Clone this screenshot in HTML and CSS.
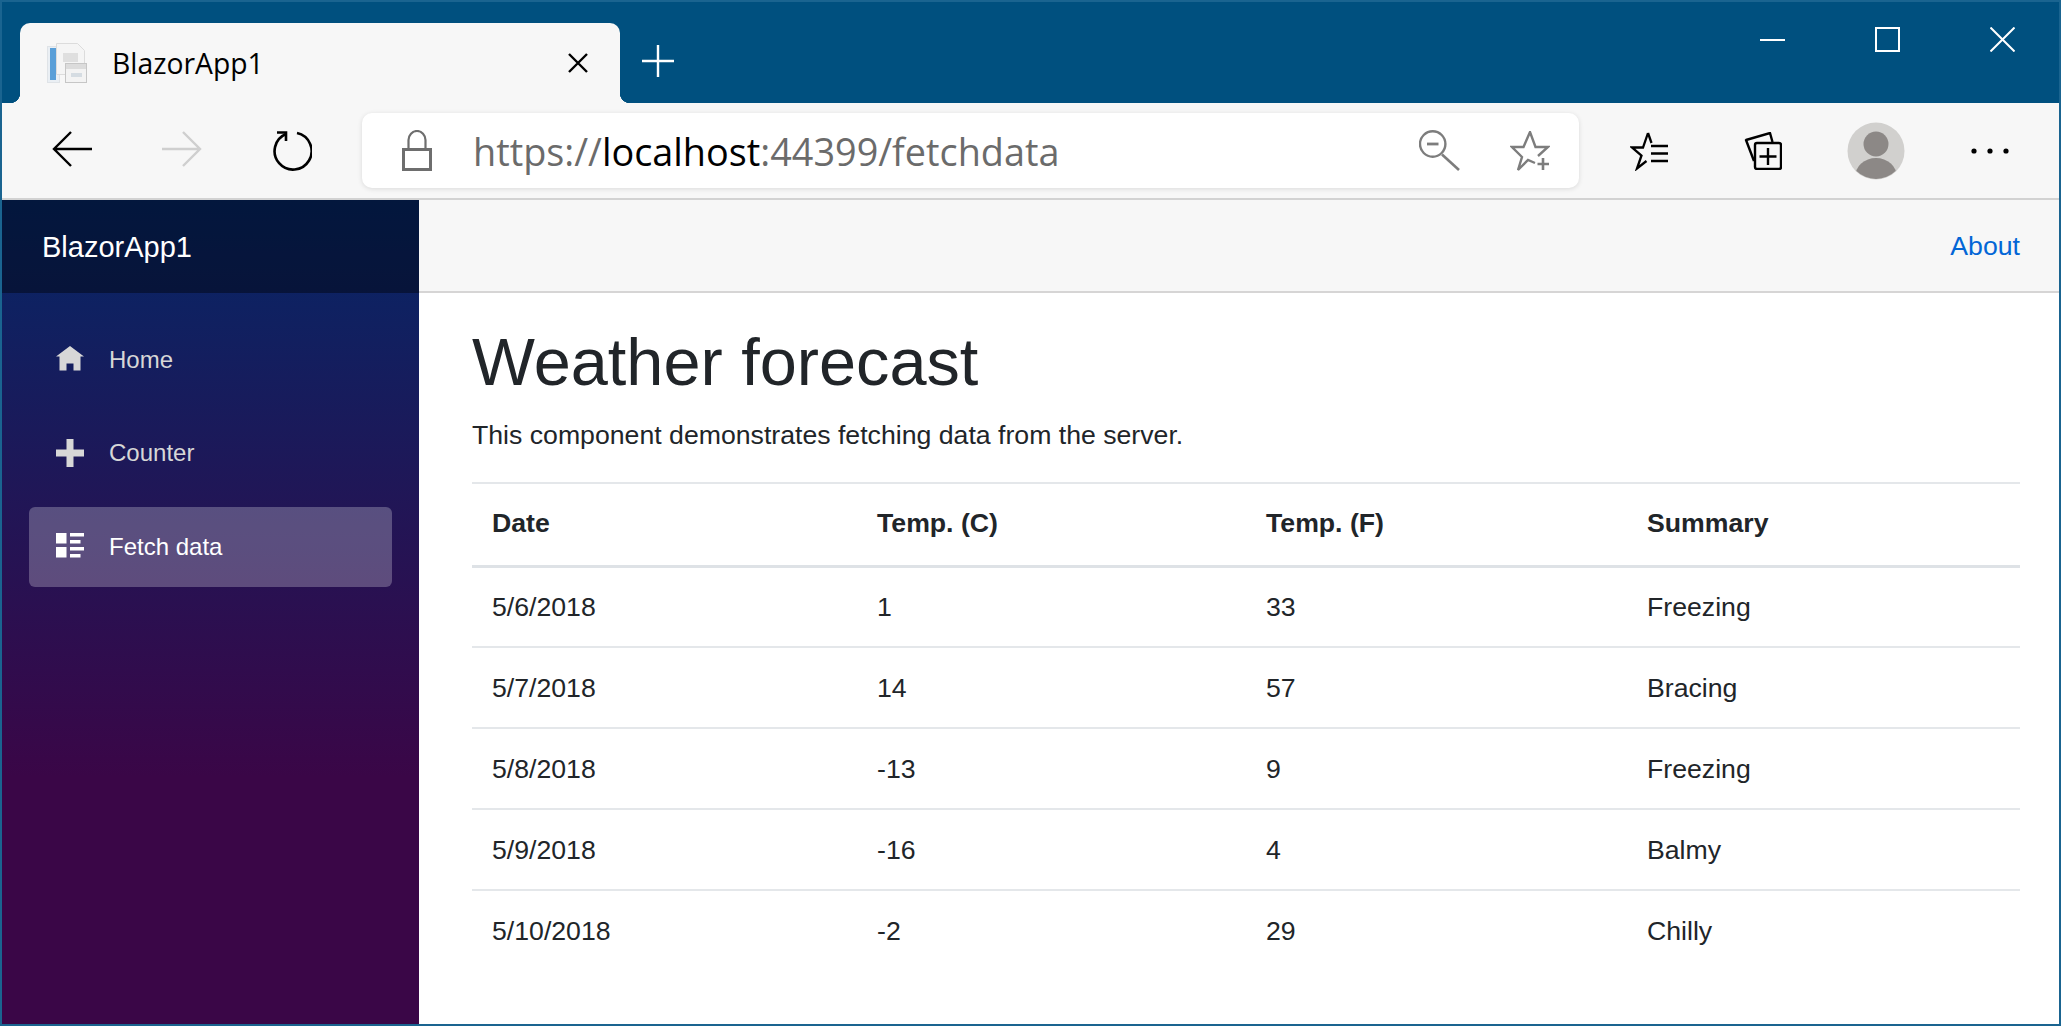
FILE: index.html
```html
<!DOCTYPE html>
<html lang="en">

<head>
    <meta charset="UTF-8">
    <title>BlazorApp1</title>
    <link rel="stylesheet" href="styles.css">
</head>

<body>
    <div class="window">
        <!-- Tabs -->
        <div class="tabstrip">
            <div class="tab">
                <svg class="favicon" width="40" height="40" viewBox="0 0 40 40">
                    <rect x="0.500" y="3.500" width="12" height="36" fill="#eaeff4" stroke="#dfe3e7" />
                    <rect x="3" y="5" width="6" height="32" fill="#5a9fd8" />
                    <path d="M9.500.5h21l7 7v24h-28z" fill="#f5f5f5" stroke="#dcdcdc" />
                    <rect x="16" y="10" width="15" height="9" fill="#dfdfdf" />
                    <rect x="18.500" y="20.500" width="21" height="19" fill="#f3f3f3" stroke="#c6c6c6" />
                    <rect x="19" y="21" width="20" height="5" fill="#dcdcdc" />
                    <rect x="24" y="30" width="11" height="4" fill="#d5dce2" />
                </svg>
                <span class="tab-title">BlazorApp1</span>
                <svg class="tab-close" width="20" height="20" viewBox="0 0 20 20">
                    <path d="M1 1l18 18M19 1L1 19" stroke="#000" stroke-width="2.400" fill="none" />
                </svg>
            </div>
            <svg class="new-tab" width="32" height="32" viewBox="0 0 32 32">
                <path d="M16 0v32M0 16h32" stroke="#fff" stroke-width="2.400" fill="none" />
            </svg>
            <div class="win-controls">
                <svg width="25" height="25" viewBox="0 0 25 25">
                    <path d="M0 13h25" stroke="#fff" stroke-width="2" />
                </svg>
                <svg width="25" height="25" viewBox="0 0 25 25">
                    <rect x="1" y="1" width="23" height="23" fill="none" stroke="#fff" stroke-width="2" />
                </svg>
                <svg width="25" height="25" viewBox="0 0 25 25">
                    <path d="M.5.5l24 24M24.500.5l-24 24" stroke="#fff" stroke-width="2" fill="none" />
                </svg>
            </div>
        </div>

        <!-- Toolbar -->
        <div class="toolbar">
            <div class="tool">
                <svg class="arrow" width="40" height="36" viewBox="0 0 40 36">
                    <path d="M19 1L2 18l17 17M2 18h38" stroke="#000" stroke-width="2.400" fill="none" />
                </svg>
            </div>
            <div class="tool">
                <svg class="arrow" width="40" height="36" viewBox="0 0 40 36">
                    <path d="M21 1l17 17-17 17M38 18H0" stroke="#cfcfcf" stroke-width="2.400" fill="none" />
                </svg>
            </div>
            <div class="tool">
                <svg width="40" height="40" viewBox="0 0 40 40">
                    <path d="M25 2A18.500 18.500 0 1 1 14 3" stroke="#000" stroke-width="2.600" fill="none" />
                    <path d="M5 1.500H14V10" stroke="#000" stroke-width="2.600" fill="none" />
                </svg>
            </div>
            <div class="address">
                <svg class="lock" width="30" height="41" viewBox="0 0 30 41">
                    <rect x="1.500" y="19.500" width="27" height="20" fill="none" stroke="#6e6e6e" stroke-width="3" />
                    <path d="M6.500 19V10a8.500 9 0 0 1 17 0v9" fill="none" stroke="#6e6e6e" stroke-width="2.200" />
                </svg>
                <div class="url"><span class="url-dim">https://</span>localhost<span class="url-dim">:44399/fetchdata</span></div>
                <svg class="zoom-out" width="41" height="41" viewBox="0 0 41 41">
                    <circle cx="13.700" cy="14" r="12.700" fill="none" stroke="#7d7d7d" stroke-width="2.400" />
                    <path d="M8 14h11.500" stroke="#7d7d7d" stroke-width="2.800" />
                    <path d="M23 24.500l17 15.500" stroke="#7d7d7d" stroke-width="2.600" />
                </svg>
                <svg class="star-add" width="40" height="40" viewBox="0 0 40 40">
                    <path d="M25 32l-7-3-10 10 4-13L2 16h11.500L20 1l5.500 15H38l-10 9" fill="none" stroke="#7d7d7d" stroke-width="2.400" />
                    <path d="M33 27v12M27.500 33H39" stroke="#7d7d7d" stroke-width="2.600" />
                </svg>
            </div>
            <div class="tool-right">
                <svg width="40" height="40" viewBox="0 0 40 40">
                    <path d="M18 2l-5 14.500H2l9.500 8L7 37.500l9.500-7.500" fill="none" stroke="#000" stroke-width="2.300" />
                    <path d="M18 2l3.500 10" fill="none" stroke="#000" stroke-width="2.300" />
                    <path d="M21 15h17M21 22.500h17M21 30h17" stroke="#000" stroke-width="2.600" />
                </svg>
            </div>
            <div class="tool-right">
                <svg width="38" height="38" viewBox="0 0 38 38">
                    <path d="M10 29L2 8l24-7 2.500 9" fill="none" stroke="#000" stroke-width="2.400" stroke-linejoin="round" />
                    <rect x="11" y="11" width="26" height="26" rx="2" fill="#f7f7f7" stroke="#000" stroke-width="2.400" />
                    <path d="M24 16v17M15.500 24.500h17" stroke="#000" stroke-width="2.400" />
                </svg>
            </div>
            <div class="tool-right">
                <svg width="58" height="58" viewBox="0 0 58 58">
                    <defs>
                        <clipPath id="avatar-clip">
                            <circle cx="29" cy="29" r="28" />
                        </clipPath>
                    </defs>
                    <circle cx="29" cy="29" r="28.500" fill="#d1d0ce" />
                    <ellipse cx="29" cy="22" rx="12.500" ry="12.500" fill="#8c8886" />
                    <ellipse cx="29" cy="55" rx="21" ry="19" fill="#8c8886" clip-path="url(#avatar-clip)" />
                </svg>
            </div>
            <div class="tool-right">
                <svg class="more" width="38" height="8" viewBox="0 0 38 8">
                    <circle cx="3" cy="4" r="2.600" />
                    <circle cx="19" cy="4" r="2.600" />
                    <circle cx="35" cy="4" r="2.600" />
                </svg>
            </div>
        </div>

        <!-- Blazor app -->
        <div class="app">
            <div class="sidebar">
                <div class="brand">BlazorApp1</div>
                <nav class="nav">
                    <a class="nav-link">
                        <svg class="oi" viewBox="0 0 8 8"><path d="M4 0l-4 3h1v4h2v-2h2v2h2v-4.030l1 .030-4-3z" /></svg>
                        Home
                    </a>
                    <a class="nav-link">
                        <svg class="oi" viewBox="0 0 8 8"><path d="M3 0v3h-3v2h3v3h2v-3h3v-2h-3v-3h-2z" /></svg>
                        Counter
                    </a>
                    <a class="nav-link active">
                        <svg class="oi" viewBox="0 0 8 8"><path d="M0 0v3h3v-3h-3zm4 0v1h4v-1h-4zm0 2v1h3v-1h-3zm-4 2v3h3v-3h-3zm4 0v1h4v-1h-4zm0 2v1h3v-1h-3z" /></svg>
                        Fetch data
                    </a>
                </nav>
            </div>
            <div class="main">
                <div class="top-row"><a class="about">About</a></div>
                <div class="content">
                    <h1>Weather forecast</h1>
                    <p>This component demonstrates fetching data from the server.</p>
                    <table class="table">
                        <colgroup>
                            <col class="col-date">
                            <col class="col-c">
                            <col class="col-f">
                            <col>
                        </colgroup>
                        <thead>
                            <tr><th>Date</th><th>Temp. (C)</th><th>Temp. (F)</th><th>Summary</th></tr>
                        </thead>
                        <tbody>
                            <tr><td>5/6/2018</td><td>1</td><td>33</td><td>Freezing</td></tr>
                            <tr><td>5/7/2018</td><td>14</td><td>57</td><td>Bracing</td></tr>
                            <tr><td>5/8/2018</td><td>-13</td><td>9</td><td>Freezing</td></tr>
                            <tr><td>5/9/2018</td><td>-16</td><td>4</td><td>Balmy</td></tr>
                            <tr><td>5/10/2018</td><td>-2</td><td>29</td><td>Chilly</td></tr>
                        </tbody>
                    </table>
                </div>
            </div>
        </div>
    </div>
</body>

</html>
```

FILE: styles.css
```css
* {
    box-sizing: border-box;
}

html,
body {
    margin: 0;
    height: 100%;
    overflow: hidden;
}

body {
    font-family: "Liberation Sans", Arial, sans-serif;
    font-size: 26.67px;
    line-height: 40px;
    color: #212529;
    background: #fff;
}

.window {
    height: 1026px;
    border: 2px solid #1a6490;
    display: flex;
    flex-direction: column;
    overflow: hidden;
}

/* Tabs */
.tabstrip {
    height: 101px;
    flex: none;
    display: flex;
    padding-left: 18px;
    background-color: #00507f;
}

.tab {
    position: relative;
    width: 600px;
    height: 80px;
    margin-top: 21px;
    padding-left: 27px;
    display: flex;
    align-items: center;
    background-color: #f7f7f7;
    border-radius: 10px 10px 0 0;
}

.tab::before,
.tab::after {
    content: "";
    position: absolute;
    bottom: 0;
    width: 10px;
    height: 10px;
}

.tab::before {
    left: -10px;
    background: radial-gradient(circle at 0 0, #00507f 10px, #f7f7f7 10.500px);
}

.tab::after {
    right: -10px;
    background: radial-gradient(circle at 100% 0, #00507f 10px, #f7f7f7 10.500px);
}

.tab-title {
    margin-left: 25px;
    flex: 1;
    font-family: "Open Sans", sans-serif;
    font-size: 28.300px;
    color: #000;
}

.tab-close {
    margin-right: 32px;
}

.new-tab {
    margin: 43px 0 0 22px;
}

.win-controls {
    margin: 25px 0 0 auto;
    padding-right: 44px;
    display: flex;
    gap: 90px;
    align-self: flex-start;
}

/* Toolbar */
.toolbar {
    height: 97px;
    flex: none;
    display: flex;
    align-items: center;
    padding-left: 15px;
    background-color: #f7f7f7;
    border-bottom: 2px solid #d2d2d2;
}

.tool {
    width: 110px;
    flex: none;
    display: flex;
    justify-content: center;
}

.arrow {
    margin-top: -3px;
}

.more {
    margin-left: 2px;
}

.tool-right {
    width: 113px;
    flex: none;
    display: flex;
    justify-content: center;
}

.address {
    width: 1217px;
    height: 75px;
    flex: none;
    margin: 0 14px 0 15px;
    display: flex;
    align-items: center;
    background-color: #fff;
    border-radius: 10px;
    box-shadow: 0 1px 5px rgba(0, 0, 0, 0.12);
}

.lock {
    margin-left: 40px;
}

.url {
    margin: 2px 0 0 41px;
    flex: 1;
    font-family: "Open Sans", sans-serif;
    font-size: 37.800px;
    color: #000;
}

.url-dim {
    color: #6b6b6b;
}

.zoom-out {
    margin-right: 50px;
}

.star-add {
    margin-right: 29px;
}

/* App */
.app {
    flex: 1;
    display: flex;
    min-height: 0;
}

.sidebar {
    width: 417px;
    flex: none;
    background-image: linear-gradient(180deg, #052767 0%, #3a0647 70%);
}

.brand {
    height: 93px;
    padding-left: 40px;
    display: flex;
    align-items: center;
    font-size: 29px;
    color: #fff;
    background-color: rgba(0, 0, 0, 0.4);
}

.nav {
    padding: 27px 27px 0;
}

.nav-link {
    height: 80px;
    margin-bottom: 13.330px;
    padding-left: 26px;
    display: flex;
    align-items: center;
    font-size: 24px;
    color: #d7d7d7;
    border-radius: 6px;
}

.nav-link.active {
    color: #fff;
    background-color: rgba(255, 255, 255, 0.25);
}

.oi {
    width: 30px;
    height: 28px;
    margin-right: 24px;
    fill: currentColor;
}

.main {
    flex: 1;
    min-width: 0;
}

.top-row {
    height: 93px;
    padding-right: 39px;
    display: flex;
    align-items: center;
    justify-content: flex-end;
    background-color: #f7f7f7;
    border-bottom: 2px solid #d6d5d5;
}

.about {
    color: #0366d6;
}

.content {
    padding: 29px 39px 0 53px;
}

h1 {
    margin: 0 0 13px;
    font-size: 66.670px;
    font-weight: 400;
    line-height: 80px;
}

p {
    margin: 0 0 27px;
}

.table {
    width: 100%;
    table-layout: fixed;
    border-collapse: collapse;
}

.col-date {
    width: 385px;
}

.col-c {
    width: 389px;
}

.col-f {
    width: 381px;
}

.table th,
.table td {
    height: 81px;
    padding: 0 20px;
    text-align: left;
    border-top: 2px solid #e4e7ea;
}

.table th {
    height: 83px;
    padding-bottom: 2px;
    border-bottom: 3px solid #dee2e6;
}
```
